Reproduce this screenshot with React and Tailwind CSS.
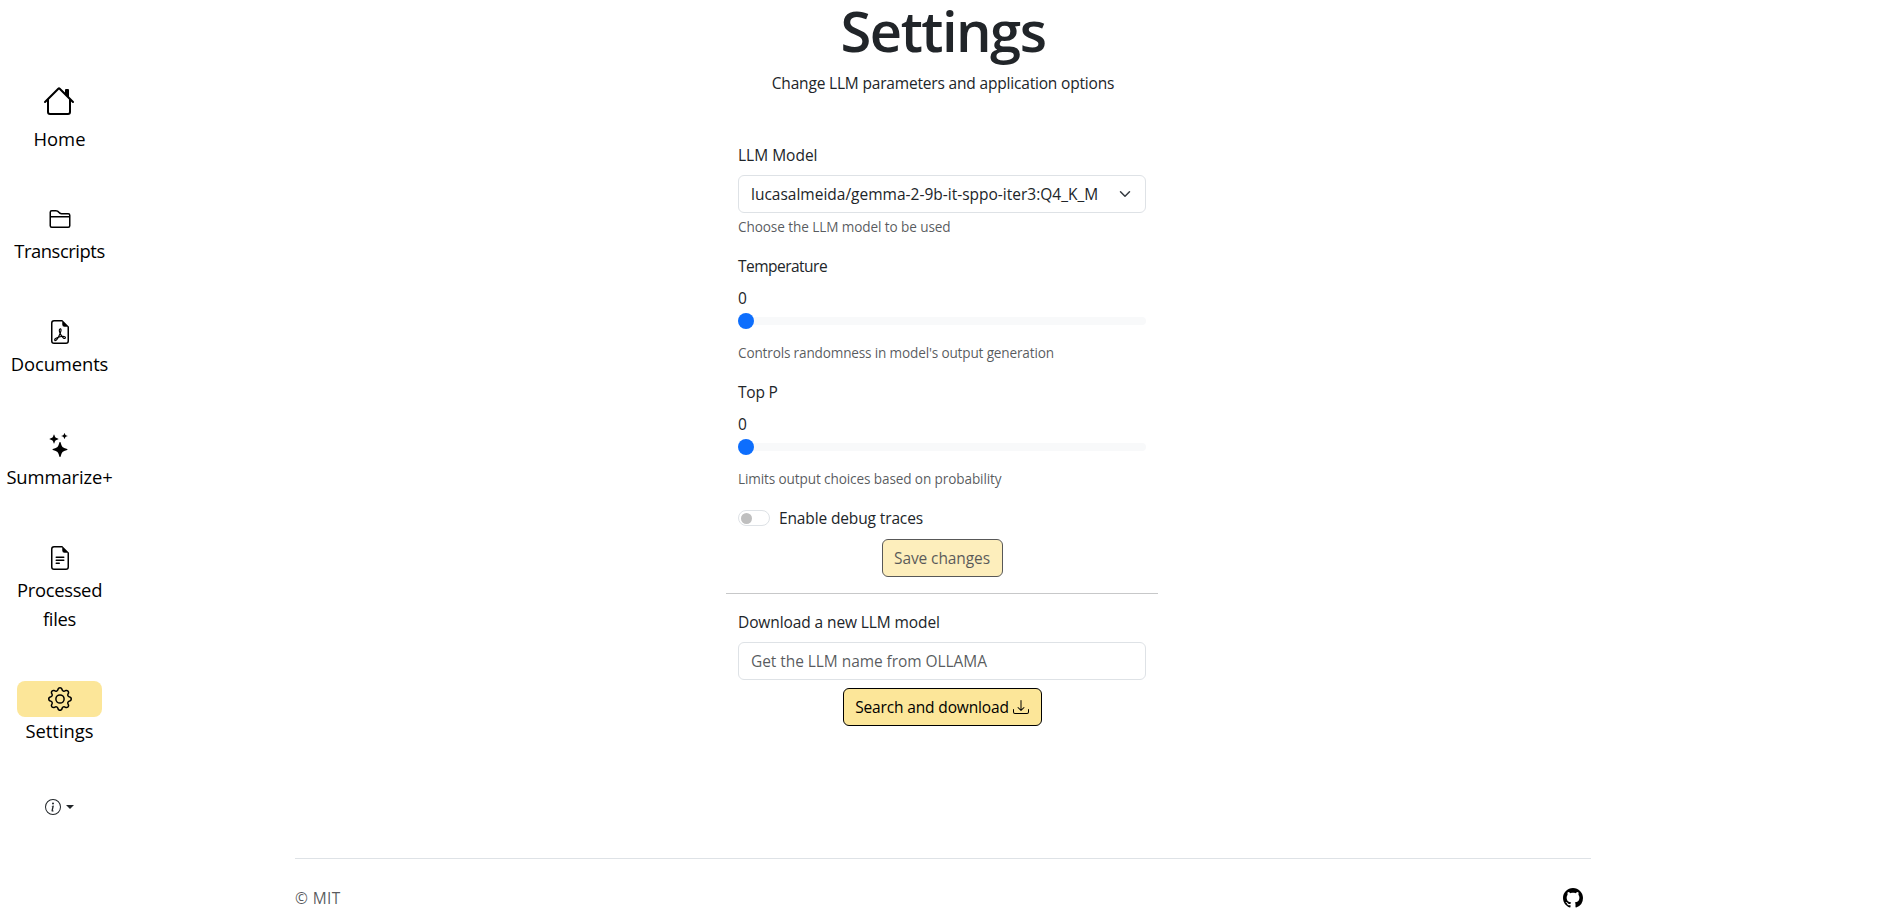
import {
  BsHouse,
  BsFolder2,
  BsFileEarmarkPdf,
  BsStars,
  BsFileEarmarkText,
  BsGear,
  BsInfoCircle,
  BsDownload,
  BsGithub,
} from "react-icons/bs";

const NAV = [
  { icon: BsFolder2, label: "Transcripts", tracking: "tracking-[-0.45px]" },
  { icon: BsFileEarmarkPdf, label: "Documents", tracking: "tracking-[-0.1px]" },
  { icon: BsStars, label: "Summarize+", tracking: "tracking-[-0.1px]" },
  { icon: BsFileEarmarkText, label: "Processed files", tracking: "tracking-[-0.3px]" },
  { icon: BsGear, label: "Settings", tracking: "tracking-normal", active: true },
];

function Sidebar() {
  return (
    <nav className="flex flex-col items-center pt-20 text-center text-[18.4px] leading-[28.8px] text-black">
      <a className="mb-12 flex flex-col items-center">
        <span className="flex h-[44.6px] items-center pb-0.5">
          <BsHouse className="size-8" />
        </span>
        <span>Home</span>
      </a>
      {NAV.map(({ icon: Icon, label, tracking, active }) => (
        <a key={label} className="mb-12 flex w-[85px] flex-col items-center">
          <span className={active ? "flex h-9 w-[85px] items-center justify-center rounded-lg bg-[#fce699]" : "flex h-9 items-center"}>
            <Icon className="size-6" />
          </span>
          <span className={tracking}>{label}</span>
        </a>
      ))}
      <button className="mt-px flex h-6 items-center text-[#212529]">
        <BsInfoCircle className="size-4" />
        <span className="ml-[5px] border-x-[4.5px] border-t-[4.5px] border-x-transparent border-t-current" />
      </button>
    </nav>
  );
}

function Help({ children, className }) {
  return <p className={"mb-[17px] text-[13.6px] leading-[21px] text-[#212529]/75 " + className}>{children}</p>;
}

function RangeField({ label, labelClass, help, helpClass }) {
  return (
    <div>
      <label className={"mb-2 block " + labelClass}>{label}</label>
      <div>0</div>
      <div className="flex h-[22px] items-center">
        <div className="flex h-2 w-full items-center rounded-full bg-[#f8f9fa]">
          <div className="size-4 rounded-full bg-[#0d6efd]" />
        </div>
      </div>
      <Help className={"mt-[10px] " + helpClass}>{help}</Help>
    </div>
  );
}

function SettingsForm() {
  return (
    <div className="-ml-[2px] w-[432px]">
      <div className="px-3">
        <label className="mb-2 block">LLM Model</label>
        <div className="flex h-[38px] items-center justify-between rounded-md border border-[#dee2e6] pr-[14px] pl-3">
          <span className="whitespace-nowrap">lucasalmeida/gemma-2-9b-it-sppo-iter3:Q4_K_M</span>
          <svg viewBox="0 0 16 16" className="size-3 shrink-0" fill="none" stroke="#343a40" strokeWidth="2" strokeLinecap="round" strokeLinejoin="round">
            <path d="m2 5 6 6 6-6" />
          </svg>
        </div>
        <Help className="mt-[3px] tracking-[-0.1px]">Choose the LLM model to be used</Help>
        <RangeField
          label="Temperature"
          labelClass="tracking-[-0.52px]"
          help="Controls randomness in model's output generation"
          helpClass="tracking-[-0.165px]"
        />
        <RangeField
          label="Top P"
          labelClass="tracking-[-0.24px]"
          help="Limits output choices based on probability"
          helpClass="tracking-[-0.12px]"
        />
        <div className="flex h-6 items-center gap-[9px]">
          <span className="flex h-4 w-8 items-center rounded-full border border-[#dee2e6] px-[1.5px]">
            <span className="size-[11px] rounded-full bg-[#bfbfbf]" />
          </span>
          <span className="tracking-[-0.13px]">Enable debug traces</span>
        </div>
        <div className="mt-[9px] flex justify-center">
          <button className="h-[38px] w-[121px] rounded-md border border-black bg-[#fce699] tracking-[-0.1px] text-black opacity-65" disabled>
            Save changes
          </button>
        </div>
      </div>
      <hr className="my-4 border-[#212529]/25" />
      <div className="px-3">
        <label className="mb-2 block tracking-[-0.1px]">Download a new LLM model</label>
        <input
          className="block h-[38px] w-full rounded-md border border-[#dee2e6] px-3 tracking-[-0.06px] placeholder:text-[#212529]/75"
          placeholder="Get the LLM name from OLLAMA"
        />
        <div className="mt-2 flex justify-center">
          <button className="flex h-[38px] w-[199px] items-center justify-center gap-1 rounded-md border border-black bg-[#fce699] text-black">
            <span className="tracking-[-0.15px]">Search and download</span>
            <BsDownload className="size-4" />
          </button>
        </div>
      </div>
    </div>
  );
}

export default function App() {
  return (
    <div className="grid h-[920px] grid-cols-[119px_1fr_124px] bg-white font-['Open_Sans',sans-serif] text-[15.5px] leading-6 text-[#212529]">
      <Sidebar />
      <main className="flex flex-col items-center">
        <h1 className="text-[56px] leading-[61px] font-semibold tracking-[-1.5px]">Settings</h1>
        <p className="mt-[10px] mb-12 tracking-[-0.18px]">Change LLM parameters and application options</p>
        <SettingsForm />
        <footer className="mt-[132px] flex w-[1296px] items-center justify-between border-t border-[#dee2e6] pt-[27px]">
          <span className="tracking-[0.4px] text-[#212529]/75">© MIT</span>
          <BsGithub className="mr-2 size-5 text-black" />
        </footer>
      </main>
    </div>
  );
}
